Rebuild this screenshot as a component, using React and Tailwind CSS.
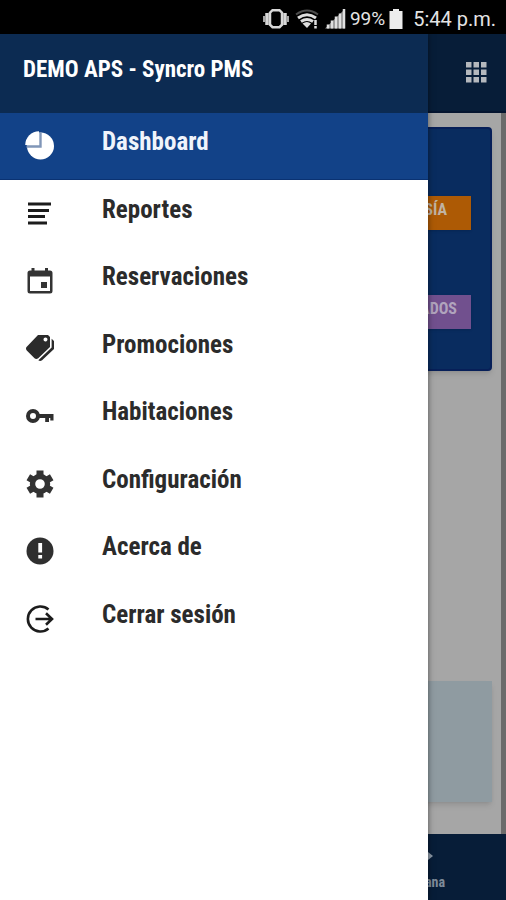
import { IoMdPricetags } from "react-icons/io";

function PieIcon() {
  return (
    <svg viewBox="0 0 32 32" className="size-8">
      <circle cx="16.500" cy="17" r="13.500" fill="white" />
      <path fill="white" d="M15 2.200V16H1.200A14 14 0 0 1 15 2.200z" />
      <path fill="none" stroke="#8096b8" strokeWidth="2.400" d="M16.500 3v14.500H2.500" />
    </svg>
  );
}

function ListIcon() {
  return (
    <svg viewBox="0 0 32 32" className="size-8" fill="#1c1c1c">
      <path d="M4 5.500h23v3H4zM4 12h21v3H4zM4 18h17v3H4zM4 24.500h19v3H4z" />
    </svg>
  );
}

function CalendarIcon() {
  return (
    <svg viewBox="0 0 32 32" className="size-8" fill="#333333">
      <path
        fillRule="evenodd"
        d="M7.500 4h3v2.500h10.500V4h3v2.500h2a2.500 2.500 0 0 1 2.500 2.500v18a2.500 2.500 0 0 1-2.500 2.500H6A2.500 2.500 0 0 1 3.500 27V9A2.500 2.500 0 0 1 6 6.500h1.500zM6 12.500V27h20V12.500z"
      />
      <path d="M17 18h6v6h-6z" />
    </svg>
  );
}

function KeyIcon() {
  return (
    <svg viewBox="0 0 32 32" className="size-8">
      <circle cx="9" cy="17" r="5" fill="none" stroke="#2f2f2f" strokeWidth="4" />
      <path fill="#2f2f2f" d="M14 15h15.500v6.500h-3.200V19h-1.300v4h-3.800v-4H14z" />
    </svg>
  );
}

function GearIcon() {
  return (
    <svg viewBox="0 0 32 32" className="size-8" fill="none" stroke="#333333">
      <circle cx="16" cy="17" r="7.500" strokeWidth="5.400" />
      <path
        strokeWidth="7"
        d="M16 3.500v5M16 25.500v5M4.300 10.250l4.300 2.500M23.400 21.250l4.300 2.500M4.300 23.750l4.300-2.500M23.400 12.750l4.300-2.500"
      />
    </svg>
  );
}

function AlertIcon() {
  return (
    <svg viewBox="0 0 32 32" className="size-8">
      <circle cx="16" cy="17" r="13.500" fill="#2f2f2f" />
      <path fill="white" d="M14.300 9h3.800v9.500h-3.800zM14.300 21h3.800v3.600h-3.800z" />
    </svg>
  );
}

function ExitIcon() {
  return (
    <svg viewBox="0 0 32 32" className="size-8" fill="none" stroke="#1c1c1c" strokeWidth="2.600">
      <path d="M24.500 7.500A12.500 12.500 0 1 0 24.500 26.500" />
      <path d="M11.500 17h16.500M22 11.300l6 5.700-6 5.700" />
    </svg>
  );
}

const menu = [
  { title: "Dashboard", icon: <PieIcon />, active: true },
  { title: "Reportes", icon: <ListIcon /> },
  { title: "Reservaciones", icon: <CalendarIcon /> },
  { title: "Promociones", icon: <IoMdPricetags className="size-8" /> },
  { title: "Habitaciones", icon: <KeyIcon /> },
  { title: "Configuración", icon: <GearIcon /> },
  { title: "Acerca de", icon: <AlertIcon /> },
  { title: "Cerrar sesión", icon: <ExitIcon /> },
];

function StatusBar() {
  return (
    <div className="flex h-[34px] items-center justify-end bg-black pt-1 pr-2.5 font-[Roboto,sans-serif] text-[19px] text-[#e4e4e4]">
      <svg viewBox="0 0 28 22" className="mr-1 h-[22px] w-7">
        <path
          fill="none"
          stroke="#d8d8d8"
          strokeWidth="2.500"
          d="M10.500 2.200h7l2.500 2.500v12l-2.500 2.500h-7L8 16.700v-12z"
        />
        <path stroke="#d8d8d8" strokeWidth="3.500" d="M5 5v12M23 5v12" />
        <path stroke="#a8a8a8" strokeWidth="2" d="M2 8v6M26 8v6" />
      </svg>
      <svg viewBox="0 0 26 22" className="mr-1 h-[22px] w-[26px]" fill="none">
        <path stroke="#4c4c4c" strokeWidth="2" d="M2 6.500Q13-1.500 24 6.500" />
        <path stroke="#dedede" strokeWidth="3" d="M4 10Q13 3.500 22 10M7 13.500Q13 9.500 19 13.500" />
        <path fill="#dedede" d="M8.500 15.500Q13 12.500 17 15.500L13 20z" />
        <path stroke="#dedede" strokeWidth="2.500" d="M21.500 12v5M21.500 18v2.500" />
      </svg>
      <svg viewBox="0 0 22 22" className="mr-1 h-[22px] w-[22px]">
        <path fill="#8a8a8a" d="M1 20.500L21 1v19.500z" />
        <path stroke="#e0e0e0" strokeWidth="2.500" d="M4 20.500v-4M8 20.500v-8M12 20.500v-12M16 20.500v-15M20 20.500V1" />
      </svg>
      <span>99%</span>
      <svg viewBox="0 0 14 22" className="mr-2.5 ml-1 h-[22px] w-3.5">
        <path fill="#ececec" d="M4 1h6v2h3.500v18H.5V3H4z" />
      </svg>
      <span className="text-xl">5:44 p.m.</span>
    </div>
  );
}

function Drawer() {
  return (
    <aside className="absolute inset-y-0 left-0 w-[428px] max-w-[85%] bg-white shadow-[0_0_6px_rgba(0,0,0,0.5)]">
      <header className="h-[79px] bg-[#0c2b52] px-[23px] pt-5">
        <h1 className="text-[23px] leading-8 font-bold text-white">
          DEMO APS - Syncro PMS
        </h1>
      </header>
      <nav className="grid h-[540px] grid-rows-8">
        {menu.map((item) => (
          <a
            key={item.title}
            href="#"
            className={
              item.active
                ? "mb-px flex border-b border-[#0a3272] bg-[#124288] pl-6 text-[#f0f4fb]"
                : "flex pl-6 text-[#2b2b2b]"
            }
          >
            <span className="mt-4 size-8">{item.icon}</span>
            <span className="mt-[13px] ml-[46px] text-[25px] leading-8 font-bold">
              {item.title}
            </span>
          </a>
        ))}
      </nav>
    </aside>
  );
}

export default function App() {
  return (
    <div className="flex min-h-screen flex-col bg-[#a6a6a6] font-['Liberation_Sans_Narrow','Roboto_Condensed',sans-serif]">
      <StatusBar />
      <div className="relative flex flex-1 flex-col overflow-hidden">
        <header className="flex h-[79px] items-center justify-end border-b-2 border-[#051530] bg-[#071d38] pr-[19px]">
          <button aria-label="Aplicaciones">
            <svg viewBox="0 0 21 21" className="size-[21px]" fill="#b4b8bd">
              <path d="M0 0h5.500v5.500H0zM7.500 0H13v5.500H7.500zM15 0h5.500v5.500H15zM0 7.500h5.500V13H0zM7.500 7.500H13V13H7.500zM15 7.500h5.500V13H15zM0 15h5.500v5.500H0zM7.500 15H13v5.500H7.500zM15 15h5.500v5.500H15z" />
            </svg>
          </button>
        </header>
        <main className="flex flex-1 flex-col justify-between border-r-[5px] border-[#6b6b6b] pt-3.5 pr-[9px] pb-8">
          <section className="flex h-[244px] flex-col items-end justify-between rounded-sm border-2 border-[#071f58] bg-[#092c5f] pt-[67px] pr-[19px] pb-10 shadow-md">
            <button className="flex h-[34px] w-32 justify-end bg-[#ad5a05] pt-1 pr-6 text-base leading-5 font-bold text-[#c0b3a2] shadow">
              SÍA
            </button>
            <button className="flex h-[34px] w-32 justify-end bg-[#71508e] pt-1 pr-3.5 text-base leading-5 font-bold text-[#b0a4bd] shadow">
              ADOS
            </button>
          </section>
          <section className="h-[121px] bg-[#8f9ba1] shadow-md" />
        </main>
        <footer className="flex h-[66px] flex-col items-end bg-[#071d38] pt-[18px] pr-[61px]">
          <svg viewBox="0 0 8 8" className="mr-3 size-2" fill="#8d9aa8">
            <path d="M3 0l5 4-5 4z" />
          </svg>
          <span className="mt-3 text-sm leading-5 font-bold text-[#7f8b99]">ana</span>
        </footer>
        <Drawer />
      </div>
    </div>
  );
}
